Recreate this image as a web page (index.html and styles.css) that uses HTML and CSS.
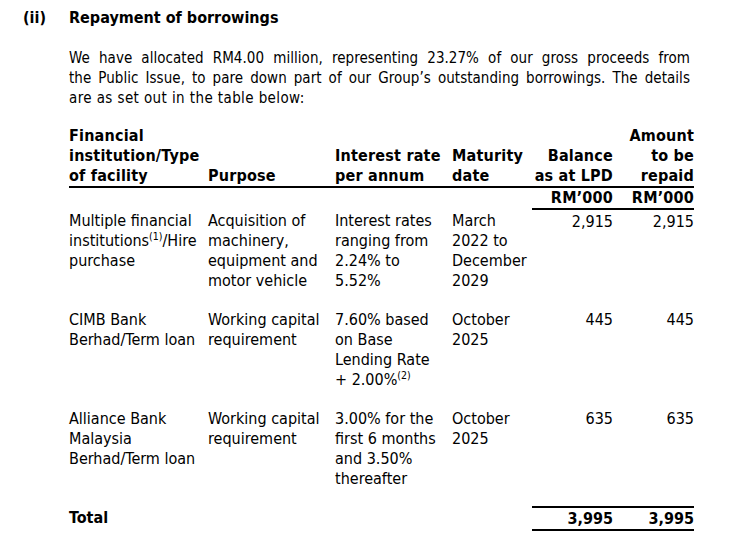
FILE: index.html
```html
<!DOCTYPE html>
<html lang="en">
<head>
<meta charset="utf-8">
<title>Repayment of borrowings</title>
<link rel="stylesheet" href="styles.css">
</head>
<body>
<section class="section">
  <h2 class="heading"><span class="num">(ii)</span><span class="title">Repayment of borrowings</span></h2>
  <div class="content">
    <p class="intro">
      <span class="jl">We have allocated RM4.00 million, representing 23.27% of our gross proceeds from</span>
      <span class="jl">the Public Issue, to pare down part of our Group’s outstanding borrowings. The details</span>
      <span class="ll">are as set out in the table below:</span>
    </p>
    <table class="tbl">
      <colgroup>
        <col class="c1"><col class="c2"><col class="c3"><col class="c4"><col class="c5"><col class="c6">
      </colgroup>
      <thead>
        <tr class="hrow">
          <th>Financial<br>institution/Type<br>of facility</th>
          <th>Purpose</th>
          <th>Interest rate<br>per annum</th>
          <th>Maturity<br>date</th>
          <th class="r">Balance<br>as at LPD</th>
          <th class="r">Amount<br>to be<br>repaid</th>
        </tr>
        <tr class="unit">
          <th></th><th></th><th></th><th></th>
          <th class="r u">RM’000</th>
          <th class="r u">RM’000</th>
        </tr>
      </thead>
      <tbody>
        <tr class="row first">
          <td>Multiple financial<br>institutions<sup>(1)</sup>/Hire<br>purchase</td>
          <td>Acquisition of<br>machinery,<br>equipment and<br>motor vehicle</td>
          <td>Interest rates<br>ranging from<br>2.24% to<br>5.52%</td>
          <td>March<br>2022 to<br>December<br>2029</td>
          <td class="r">2,915</td>
          <td class="r">2,915</td>
        </tr>
        <tr class="row">
          <td>CIMB Bank<br>Berhad/Term loan</td>
          <td>Working capital<br>requirement</td>
          <td>7.60% based<br>on Base<br>Lending Rate<br>+ 2.00%<sup>(2)</sup></td>
          <td>October<br>2025</td>
          <td class="r">445</td>
          <td class="r">445</td>
        </tr>
        <tr class="row last">
          <td>Alliance Bank<br>Malaysia<br>Berhad/Term loan</td>
          <td>Working capital<br>requirement</td>
          <td>3.00% for the<br>first 6 months<br>and 3.50%<br>thereafter</td>
          <td>October<br>2025</td>
          <td class="r">635</td>
          <td class="r">635</td>
        </tr>
      </tbody>
      <tfoot>
        <tr class="total">
          <td class="b">Total</td>
          <td></td><td></td><td></td>
          <td class="r b tl">3,995</td>
          <td class="r b tl">3,995</td>
        </tr>
      </tfoot>
    </table>
  </div>
</section>
</body>
</html>
```

FILE: styles.css
```css
html, body {
  margin: 0;
  padding: 0;
  background: #ffffff;
}

body {
  font-family: "DejaVu Sans Condensed", "DejaVu Sans", sans-serif;
  font-stretch: condensed;
  font-size: 16px;
  line-height: 20px;
  color: #000000;
}

.section {
  padding: 8px 0 0 23px;
}

.heading {
  display: flex;
  margin: 0;
  font-size: 16px;
  line-height: 20px;
  font-weight: bold;
}

.num {
  width: 46px;
  flex: none;
}

.content {
  margin-left: 46px;
  width: 625px;
}

.intro {
  margin: 20px 0 0;
  width: 621px;
  font-size: 15px;
  letter-spacing: 0.05px;
}

.jl {
  display: block;
  white-space: nowrap;
  text-align: justify;
  text-align-last: justify;
}

.ll {
  display: block;
  white-space: nowrap;
  letter-spacing: 0.4px;
}

.tbl {
  margin-top: 18px;
  width: 625px;
  border-collapse: collapse;
  table-layout: fixed;
}

.c1 { width: 139px; }
.c2 { width: 127px; }
.c3 { width: 117px; }
.c4 { width: 80px; }
.c5 { width: 81px; }
.c6 { width: 81px; }

.tbl th,
.tbl td {
  padding: 0;
  text-align: left;
  white-space: nowrap;
  vertical-align: top;
}

.tbl th {
  font-weight: bold;
  letter-spacing: 0.2px;
}

.hrow th {
  vertical-align: bottom;
  border-bottom: 2px solid #000;
}

.tbl .r {
  text-align: right;
}

.unit .u {
  border-bottom: 2px solid #000;
}

.row td {
  padding-bottom: 19px;
}

.row.first td {
  padding-top: 2px;
}

.row.last td {
  padding-bottom: 18px;
}

.total td {
  padding: 1px 0 0;
}

.tbl .b {
  font-weight: bold;
}

.total .tl {
  border-top: 2px solid #000;
  border-bottom: 2px solid #000;
}

sup {
  font-size: 10.5px;
  line-height: 0;
  vertical-align: 6px;
}
```
